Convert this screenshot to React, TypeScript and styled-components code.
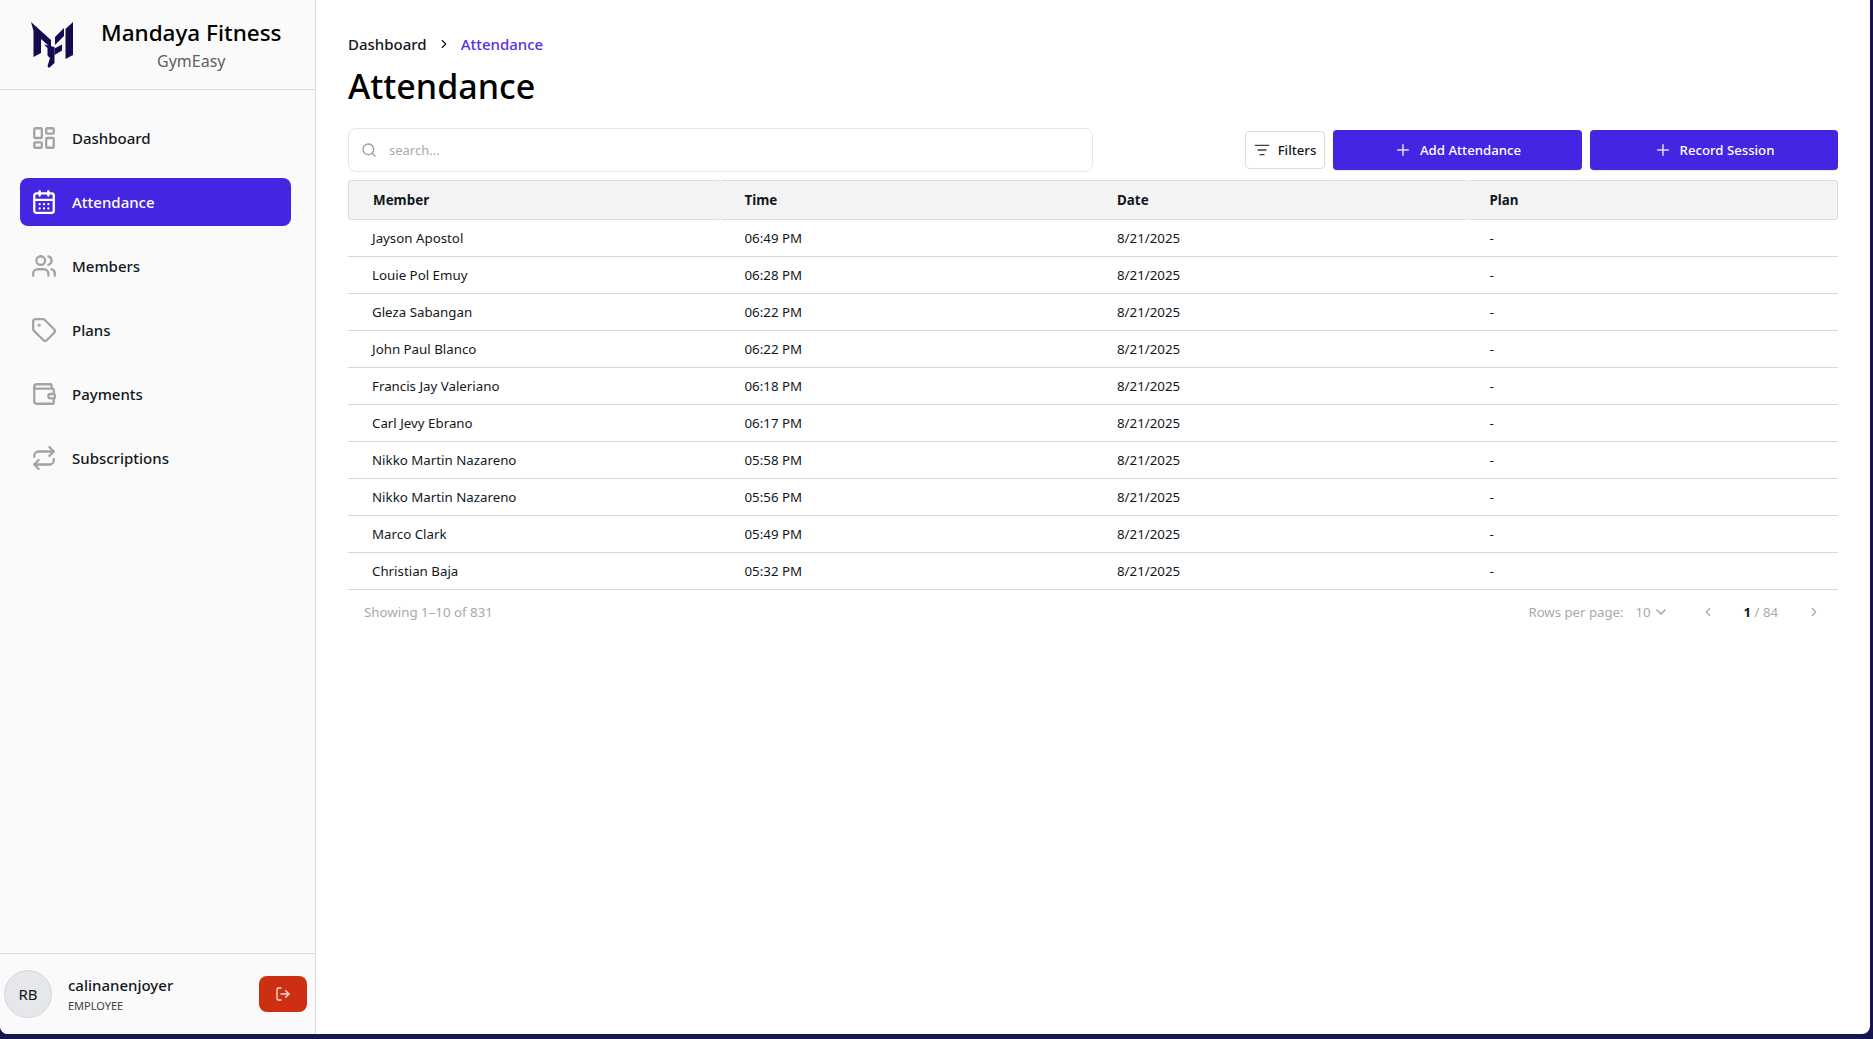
import React from "react";
import styled, { createGlobalStyle } from "styled-components";
import {
  LayoutDashboard, CalendarDays, Users, Tag, Wallet, Repeat, LogOut,
  Search, ListFilter, Plus, ChevronRight, ChevronLeft, ChevronDown,
} from "lucide-react";

const Global = createGlobalStyle`
  html, body { margin: 0; padding: 0; height: 100%; overflow: hidden; background: #17174f; }
  * { box-sizing: border-box; }
  body { font-family: "Noto Sans", "Open Sans", sans-serif; color: #11181c; }
`;

const Windowed = styled.div`
  width: 1870px; height: 1034px; display: flex; background: #fff;
  border-radius: 0 0 8px 8px; overflow: hidden;
`;
const Sidebar = styled.aside`
  width: 316px; flex: none; display: flex; flex-direction: column;
  background: #fafafa; border-right: 1px solid #dcdcdf;
`;
const Brand = styled.header`
  height: 90px; flex: none; display: flex; align-items: center; padding-left: 31px;
  border-bottom: 1px solid #dcdcdf;
`;
const BrandText = styled.div`
  display: flex; flex-direction: column; align-items: center; margin-left: 26px;
`;
const BrandName = styled.div`font-size: 22.5px; line-height: 32px; font-weight: 500; color: #000;`;
const BrandSub = styled.div`font-size: 16px; line-height: 24px; color: #5f5f66;`;
const Nav = styled.nav`
  flex: 1; display: flex; flex-direction: column; gap: 16px; padding: 24px 24px 0 20px;
`;
const NavItem = styled.a<{ $active?: boolean }>`
  height: 48px; display: flex; align-items: center; gap: 15px; padding-left: 11px; border-radius: 8px;
  font-size: 15px; font-weight: 500; text-decoration: none;
  background: ${(p) => (p.$active ? "#4425e2" : "transparent")};
  color: ${(p) => (p.$active ? "#fff" : "#11181c")};
  svg { color: ${(p) => (p.$active ? "#fff" : "#a3a3a3")}; flex: none; }
`;
const UserBar = styled.footer`
  height: 81px; flex: none; display: flex; align-items: center; padding: 0 8px 0 4px;
  border-top: 1px solid #dcdcdf;
`;
const Avatar = styled.div`
  width: 48px; height: 48px; border-radius: 50%; background: #e5e7eb; border: 1px solid #d8d8dc;
  display: flex; align-items: center; justify-content: center; font-size: 15px; color: #11181c; flex: none;
`;
const UserInfo = styled.div`margin-left: 16px; flex: 1; display: flex; flex-direction: column;`;
const UserName = styled.div`font-size: 15px; line-height: 22px; font-weight: 500; color: #11181c;`;
const UserRole = styled.div`font-size: 11px; line-height: 16px; margin-top: 2px; color: #3f3f46;`;
const LogoutBtn = styled.button`
  width: 48px; height: 36px; border: 0; border-radius: 8px; background: #cc2f12; color: #fff;
  display: flex; align-items: center; justify-content: center; padding: 0;
  svg { opacity: .85; }
`;
const Main = styled.main`
  flex: 1; min-width: 0; padding: 32px 32px 0 32px; display: flex; flex-direction: column;
`;
const Crumbs = styled.div`
  display: flex; align-items: center; height: 24px; font-size: 15px; font-weight: 500; color: #11181c;
  svg { margin: 0 10px; }
`;
const CrumbActive = styled.span`color: #5b2ee6;`;
const Title = styled.h1`
  margin: 6px 0 18px; font-size: 34px; line-height: 48px; font-weight: 500; color: #000;
`;
const Toolbar = styled.div`display: flex; align-items: center; height: 44px;`;
const SearchBox = styled.div`
  width: 745px; height: 44px; display: flex; align-items: center; gap: 12px; padding-left: 12px;
  border: 1px solid #e6e6e8; border-radius: 8px; background: #fff;
  font-size: 13px; color: #a8a8ae; svg { color: #9a9aa0; flex: none; }
`;
const Actions = styled.div`margin-left: auto; display: flex; align-items: center; gap: 8px;`;
const FilterBtn = styled.button`
  width: 80px; height: 38px; display: flex; align-items: center; justify-content: center; gap: 8px; padding: 0;
  background: #fff; border: 1px solid #dcdcdf; border-radius: 4px;
  font: 500 13.2px "Noto Sans", sans-serif; color: #11181c;
  svg { color: #3f3f46; flex: none; }
`;
const PrimaryBtn = styled.button<{ $w: number }>`
  width: ${(p) => p.$w}px; height: 40px; display: flex; align-items: center; justify-content: center; gap: 8px; padding: 0;
  background: #4425e2; color: #fff; border: 0; border-radius: 4px;
  font: 500 13.2px "Noto Sans", sans-serif;
  box-shadow: 0 1px 2px rgba(0,0,0,.1);
  svg { opacity: .85; }
`;
const Table = styled.table`
  margin-top: 8px; width: 1490px; border-collapse: separate; border-spacing: 0; table-layout: fixed;
`;
const Th = styled.th`
  height: 40px; padding: 0 0 0 24px; text-align: left; font-size: 13.4px; font-weight: 700; color: #11181c;
  background: #f4f4f5; border: 1px solid #dcdcdf; border-left-width: 0; border-right-width: 0;
  &:first-child { border-left-width: 1px; border-radius: 4px; }
  &:last-child { border-right-width: 1px; border-radius: 4px; }
`;
const Td = styled.td`
  height: 37px; padding: 0 0 0 24px; font-size: 13.3px; color: #11181c; border-bottom: 1px solid #d8d8dc;
`;
const Pager = styled.div`
  height: 43px; padding: 0 17px 0 16px; display: flex; align-items: center;
  font-size: 13.3px; color: #a8a8ae;
`;
const PagerRight = styled.div`margin-left: auto; display: flex; align-items: center; font-size: 13.2px;`;
const RowsSelect = styled.span`display: flex; align-items: center; gap: 2px; margin-left: 12px;`;
const PagerArrow = styled.span<{ $l: number; $r: number }>`
  display: flex; margin: 0 ${(p) => p.$r}px 0 ${(p) => p.$l}px;
`;
const PageNow = styled.b`color: #11181c; font-weight: 700;`;

const Logo = () => (
  <svg width="44" height="46" viewBox="0 0 44 46" fill="#160a50" style={{ flex: "none" }}>
    <path d="M0 0 L20 18 L20 26 L10 17 L10 31 L2.5 35 L2.5 9 Z" />
    <path d="M13 22.5 L23.5 25 L23.5 41 L18 46 L16.5 44 L19 36 L16.5 33.5 L16.5 26 Z" />
    <path d="M24 23 L33 14 L33 6 L24 15 Z" />
    <path d="M23.5 26.5 L31 22.5 L31 28.5 L23.5 33 Z" />
    <path d="M42 0 L42 33 L34.5 37 L34.5 7 Z" />
  </svg>
);

const rows: [string, string][] = [
  ["Jayson Apostol", "06:49 PM"], ["Louie Pol Emuy", "06:28 PM"], ["Gleza Sabangan", "06:22 PM"],
  ["John Paul Blanco", "06:22 PM"], ["Francis Jay Valeriano", "06:18 PM"], ["Carl Jevy Ebrano", "06:17 PM"],
  ["Nikko Martin Nazareno", "05:58 PM"], ["Nikko Martin Nazareno", "05:56 PM"], ["Marco Clark", "05:49 PM"],
  ["Christian Baja", "05:32 PM"],
];
const nav = [
  { label: "Dashboard", Icon: LayoutDashboard }, { label: "Attendance", Icon: CalendarDays, active: true },
  { label: "Members", Icon: Users }, { label: "Plans", Icon: Tag }, { label: "Payments", Icon: Wallet },
  { label: "Subscriptions", Icon: Repeat },
];

export default function App() {
  return (
    <>
      <Global />
      <Windowed>
        <Sidebar>
          <Brand>
            <Logo />
            <BrandText>
              <BrandName>Mandaya Fitness</BrandName>
              <BrandSub>GymEasy</BrandSub>
            </BrandText>
          </Brand>
          <Nav>
            {nav.map(({ label, Icon, active }) => (
              <NavItem key={label} $active={active}><Icon size={26} strokeWidth={2.1} />{label}</NavItem>
            ))}
          </Nav>
          <UserBar>
            <Avatar>RB</Avatar>
            <UserInfo>
              <UserName>calinanenjoyer</UserName>
              <UserRole>EMPLOYEE</UserRole>
            </UserInfo>
            <LogoutBtn><LogOut size={16} /></LogoutBtn>
          </UserBar>
        </Sidebar>
        <Main>
          <Crumbs>Dashboard<ChevronRight size={14} /><CrumbActive>Attendance</CrumbActive></Crumbs>
          <Title>Attendance</Title>
          <Toolbar>
            <SearchBox><Search size={16} />search...</SearchBox>
            <Actions>
              <FilterBtn><ListFilter size={16} />Filters</FilterBtn>
              <PrimaryBtn $w={249}><Plus size={18} />Add Attendance</PrimaryBtn>
              <PrimaryBtn $w={248}><Plus size={18} />Record Session</PrimaryBtn>
            </Actions>
          </Toolbar>
          <Table>
            <thead><tr><Th>Member</Th><Th>Time</Th><Th>Date</Th><Th>Plan</Th></tr></thead>
            <tbody>
              {rows.map(([n, t], i) => (
                <tr key={i}><Td>{n}</Td><Td>{t}</Td><Td>8/21/2025</Td><Td>-</Td></tr>
              ))}
            </tbody>
          </Table>
          <Pager>
            Showing 1–10 of 831
            <PagerRight>
              Rows per page:
              <RowsSelect>10<ChevronDown size={16} strokeWidth={2.5} /></RowsSelect>
              <PagerArrow $l={32} $r={29}><ChevronLeft size={14} /></PagerArrow>
              <span><PageNow>1</PageNow> / 84</span>
              <PagerArrow $l={29} $r={0}><ChevronRight size={14} /></PagerArrow>
            </PagerRight>
          </Pager>
        </Main>
      </Windowed>
    </>
  );
}
